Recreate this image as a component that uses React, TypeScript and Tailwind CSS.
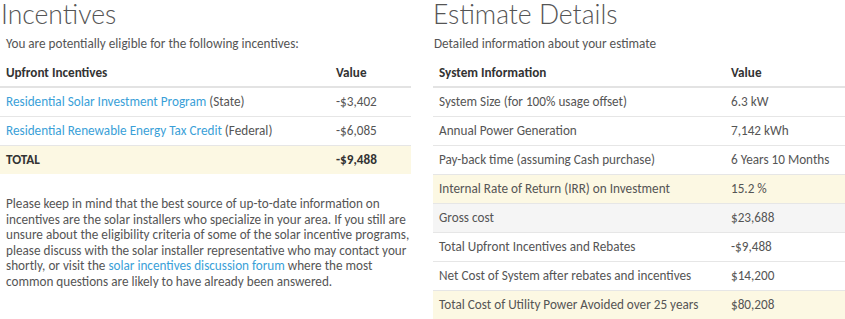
import React from "react";

const body = { fontFamily: "Carlito, Calibri, Lato, 'Open Sans', sans-serif" };
const heading = { fontFamily: "Lato, 'Noto Sans', sans-serif" };

type Row = { label: React.ReactNode; value: string; tone?: "warn" | "gray"; bold?: boolean };

const incentives: Row[] = [
  {
    label: (
      <>
        <a className="text-[#3a9fd8]">Residential Solar Investment Program</a> (State)
      </>
    ),
    value: "-$3,402",
  },
  {
    label: (
      <>
        <a className="text-[#3a9fd8]">Residential Renewable Energy Tax Credit</a> (Federal)
      </>
    ),
    value: "-$6,085",
  },
  { label: "TOTAL", value: "-$9,488", tone: "warn", bold: true },
];

const details: Row[] = [
  { label: "System Size (for 100% usage offset)", value: "6.3 kW" },
  { label: "Annual Power Generation", value: "7,142 kWh" },
  { label: "Pay-back time (assuming Cash purchase)", value: "6 Years 10 Months" },
  { label: "Internal Rate of Return (IRR) on Investment", value: "15.2 %", tone: "warn" },
  { label: "Gross cost", value: "$23,688", tone: "gray" },
  { label: "Total Upfront Incentives and Rebates", value: "-$9,488" },
  { label: "Net Cost of System after rebates and incentives", value: "$14,200" },
  { label: "Total Cost of Utility Power Avoided over 25 years", value: "$80,208", tone: "warn" },
];

function DataTable({
  head,
  rows,
  valueWidth,
}: {
  head: string;
  rows: Row[];
  valueWidth: string;
}) {
  return (
    <table className="w-full border-collapse text-[13.2px] text-[#555]">
      <thead>
        <tr className="h-[28px] border-b-2 border-[#e3e3e3]">
          <th className="px-[6px] text-left font-bold text-[#333]">{head}</th>
          <th className={`${valueWidth} px-[6px] text-left font-bold text-[#333]`}>Value</th>
        </tr>
      </thead>
      <tbody>
        {rows.map((r, i) => (
          <tr
            key={i}
            className={`h-[29px] border-t border-[#e6e6e6] ${
              r.tone === "warn" ? "bg-[#fcf8e3]" : r.tone === "gray" ? "bg-[#f5f5f5]" : ""
            } ${r.bold ? "font-bold text-[#333]" : ""}`}
          >
            <td className="px-[6px]">{r.label}</td>
            <td className="px-[6px]">{r.value}</td>
          </tr>
        ))}
      </tbody>
    </table>
  );
}

export default function App() {
  return (
    <div className="flex w-[845px] gap-[22px] bg-white" style={body}>
      <div className="w-[411px]">
        <h2 className="h-[30px] pl-[1px] text-[26.5px] font-light leading-[29px] text-[#555]" style={heading}>
          Incentives
        </h2>
        <p className="mt-[5px] h-[18px] pl-[6px] text-[13.2px] leading-[18px] text-[#555]">
          You are potentially eligible for the following incentives:
        </p>
        <div className="mt-[6px]">
          <DataTable head="Upfront Incentives" rows={incentives} valueWidth="w-[81px]" />
        </div>
        <p className="mt-[22px] pl-[6px] text-[13.2px] leading-[15.6px] text-[#555]">
          Please keep in mind that the best source of up-to-date information on incentives are the
          solar installers who specialize in your area. If you still are unsure about the eligibility
          criteria of some of the solar incentive programs, please discuss with the solar installer
          representative who may contact your shortly, or visit the{" "}
          <a className="text-[#3a9fd8]">solar incentives discussion forum</a> where the most common
          questions are likely to have already been answered.
        </p>
      </div>
      <div className="w-[412px]">
        <h2 className="h-[30px] text-[26.5px] font-light leading-[29px] text-[#555]" style={heading}>
          Estimate Details
        </h2>
        <p className="mt-[5px] h-[18px] pl-[1px] text-[13.2px] leading-[18px] text-[#555]">
          Detailed information about your estimate
        </p>
        <div className="mt-[6px]">
          <DataTable head="System Information" rows={details} valueWidth="w-[120px]" />
        </div>
      </div>
    </div>
  );
}
